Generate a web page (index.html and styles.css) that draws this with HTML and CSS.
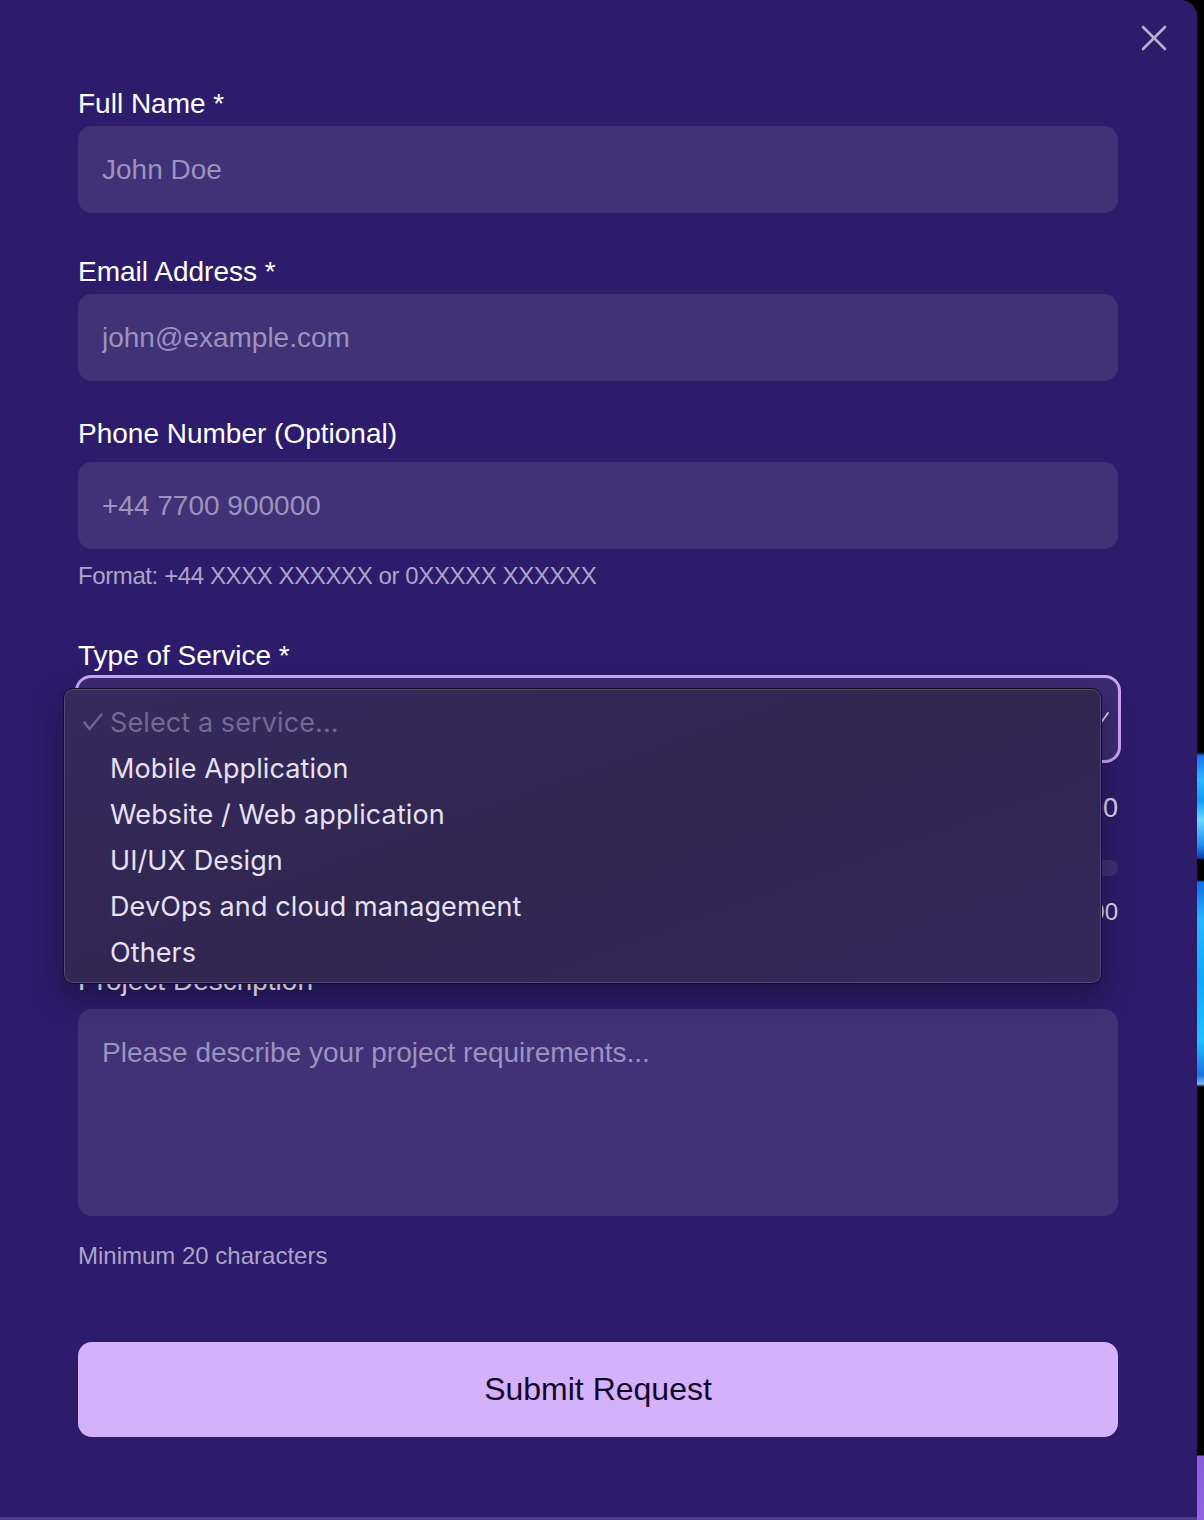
FILE: index.html
```html
<!DOCTYPE html>
<html lang="en">
<head>
<meta charset="utf-8">
<title>Request a Quote</title>
<link rel="stylesheet" href="styles.css">
</head>
<body>
<div class="page">
  <div class="modal">
    <button class="close" type="button" aria-label="Close">
      <svg width="26" height="26" viewBox="0 0 26 26"><path d="M2 2 L24 24 M24 2 L2 24" stroke="#b6b1cf" stroke-width="2.6" stroke-linecap="round" fill="none"/></svg>
    </button>
    <form class="form">
      <div class="field">
        <label class="label">Full Name *</label>
        <input class="input" type="text" placeholder="John Doe">
      </div>
      <div class="field field-email">
        <label class="label">Email Address *</label>
        <input class="input" type="email" placeholder="john@example.com">
      </div>
      <div class="field field-phone">
        <label class="label label-optional">Phone Number (Optional)</label>
        <input class="input" type="tel" placeholder="+44 7700 900000">
        <p class="hint hint-format">Format: +44 XXXX XXXXXX or 0XXXXX XXXXXX</p>
      </div>
      <div class="field field-service">
        <label class="label">Type of Service *</label>
        <div class="select">
          <svg class="chevron" width="20" height="14" viewBox="0 0 20 14"><path d="M2 2 L10 12 L18 1" stroke="#ddd6ee" stroke-width="1.8" fill="none" stroke-linecap="round"/></svg>
        </div>
      </div>
      <div class="budget">
        <div class="budget-row">
          <span class="budget-value">£10,000</span>
        </div>
        <div class="track"><div class="track-fill"></div></div>
        <div class="budget-range">
          <span>£100,000</span>
        </div>
      </div>
      <div class="field field-desc">
        <label class="label label-optional">Project Description</label>
        <textarea class="textarea" placeholder="Please describe your project requirements..."></textarea>
        <p class="hint hint-min">Minimum 20 characters</p>
      </div>
      <button class="submit" type="button">Submit Request</button>
    </form>

    <div class="popup" role="listbox">
      <div class="option option-disabled">
        <svg class="check" width="20" height="18" viewBox="0 0 20 18"><path d="M1.5 9.5 L6.5 16 L18.5 1.5" stroke="#6e6590" stroke-width="2.4" fill="none" stroke-linecap="round" stroke-linejoin="round"/></svg>
        <span>Select a service...</span>
      </div>
      <div class="option"><span>Mobile Application</span></div>
      <div class="option"><span>Website / Web application</span></div>
      <div class="option"><span>UI/UX Design</span></div>
      <div class="option"><span>DevOps and cloud management</span></div>
      <div class="option"><span>Others</span></div>
    </div>
  </div>
  <div class="backdrop-strip"></div>
</div>
</body>
</html>
```

FILE: styles.css
```css
* { box-sizing: border-box; }

html, body {
  margin: 0;
  padding: 0;
  background: #000;
}

body {
  font-family: "Liberation Sans", Arial, sans-serif;
}

.page {
  display: flex;
  width: 1204px;
  height: 1520px;
  overflow: hidden;
}

.modal {
  position: relative;
  width: 1197px;
  height: 1520px;
  flex: none;
  background: #2d1c6b;
  border-top-right-radius: 16px;
  border-bottom: 3px solid #4e3b92;
  padding: 0 79px 0 78px;
}

.backdrop-strip {
  flex: 1;
  background: linear-gradient(to bottom,
    #000 0px, #000 752px,
    #1873f0 756px, #2fb8ff 780px, #0e9cf5 800px, #6ad8ff 820px, #1f8ef0 845px, #0a3fb0 858px,
    #000 860px, #000 880px,
    #0f6fe6 882px, #28b6ff 920px, #0fa8f8 980px, #1ec2ff 1040px, #1a74e0 1075px, #7fb4f0 1084px,
    #000 1087px, #000 1455px,
    #8a5ddf 1456px, #9365e6 1520px);
}

.close {
  position: absolute;
  top: 25px;
  right: 30px;
  width: 26px;
  height: 26px;
  padding: 0;
  border: 0;
  background: none;
  cursor: pointer;
}

.close svg { display: block; }

.form {
  display: flex;
  flex-direction: column;
  padding-top: 88px;
}

.field {
  display: flex;
  flex-direction: column;
}

.label {
  display: block;
  color: #fff;
  font-size: 28px;
  line-height: 32px;
  margin-bottom: 6px;
}

.label-optional { margin-bottom: 12px; }

.field-email { margin-top: 43px; }
.field-phone { margin-top: 37px; }
.field-service { margin-top: 48px; }
.field-desc { margin-top: 37px; }

.input,
.textarea {
  width: 100%;
  border: 0;
  outline: none;
  border-radius: 14px;
  background: #413177;
  color: #fff;
  font-family: "Liberation Sans", Arial, sans-serif;
  font-size: 28px;
  padding: 0 24px;
}

.input { height: 87px; }

.textarea {
  height: 207px;
  padding: 24px;
  line-height: 40px;
  resize: none;
  display: block;
}

.input::placeholder,
.textarea::placeholder {
  color: #9c93bd;
  opacity: 1;
}

.hint {
  margin: 0;
  color: #aba4c8;
  font-size: 24px;
  line-height: 32px;
}

.hint-format { margin-top: 11px; letter-spacing: -0.4px; }
.hint-min { margin-top: 24px; }

.select {
  position: relative;
  height: 82px;
  border-radius: 13px;
  background: #3b2c72;
  box-shadow: 0 0 0 3px #c9a6f7;
}

.chevron {
  position: absolute;
  right: 8px;
  top: 34px;
}

.budget {
  margin-top: 32px;
  display: flex;
  flex-direction: column;
}

.budget-row,
.budget-range {
  display: flex;
  justify-content: flex-end;
  align-items: center;
  height: 32px;
  color: #ddd7ea;
  font-size: 27px;
  line-height: 32px;
}

.track {
  margin-top: 36px;
  height: 16px;
  border-radius: 8px;
  background: #3e3073;
  overflow: hidden;
}

.track-fill {
  width: 30%;
  height: 100%;
  background: #c9a6f7;
}

.budget-range { margin-top: 20px; font-size: 24px; }

.submit {
  margin-top: 70px;
  height: 95px;
  width: 100%;
  border: 0;
  border-radius: 14px;
  background: #d4b2fb;
  color: #120727;
  font-family: "Liberation Sans", Arial, sans-serif;
  font-size: 32px;
  cursor: pointer;
}

/* native-style open dropdown menu overlaying the form */
.popup {
  position: absolute;
  left: 63px;
  top: 688px;
  width: 1039px;
  height: 296px;
  padding: 10px 0;
  border-radius: 10px;
  background: linear-gradient(160deg, #352a5c 0%, #30264f 50%, #33285a 100%);
  border: 1px solid #130d22;
  box-shadow: inset 0 0 0 1px #54497a, 0 12px 30px rgba(0, 0, 0, 0.35);
  font-family: Inter, "Noto Sans", sans-serif;
}

.option {
  position: relative;
  height: 46px;
  display: flex;
  align-items: center;
  padding-left: 46px;
  color: #e6e0f1;
  font-size: 27px;
  letter-spacing: 0.1px;
}

.option-disabled { color: #736a93; }

.check {
  position: absolute;
  left: 19px;
  top: 14px;
}
```
